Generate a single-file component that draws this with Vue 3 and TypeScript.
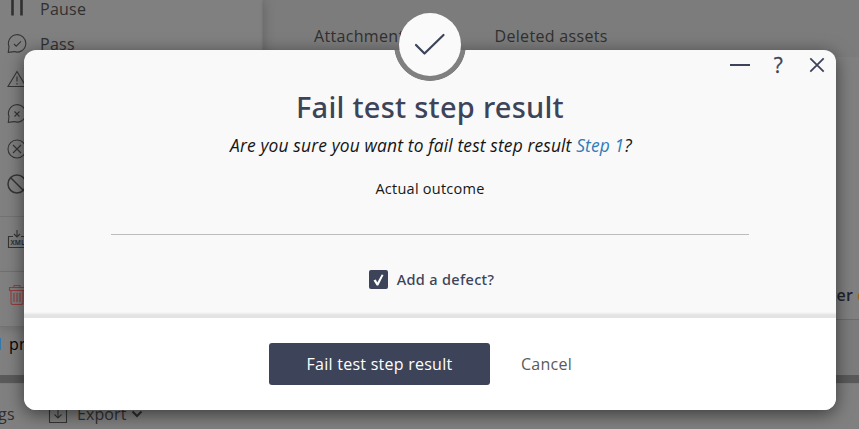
<script setup lang="ts">
import { ref } from 'vue'

const outcome = ref('')
const addDefect = ref(true)
</script>

<template>
  <div class="screen">
    <div class="page">
      <div class="upper">
        <aside class="side">
          <div class="menu">
            <div class="item">
              <svg class="pause" width="20" height="24" viewBox="0 0 20 24"><path d="M5.500 0v18.500M14.500 0v18.500" /></svg>
              <span>Pause</span>
            </div>
            <div class="item">
              <svg width="20" height="20" viewBox="0 0 20 20"><path d="M1.300 18.300 2 12.500A8.700 8.700 0 1 1 7.300 17.600Z" /><path d="m7 10 2.200 2.200 4.800-4.800" /></svg>
              <span>Pass</span>
            </div>
            <div class="item">
              <svg width="20" height="20" viewBox="0 0 20 20"><path d="M10 2.500 19 17.500H1Z" /><path d="M10 7.500v5M10 14v1.500" /></svg>
            </div>
            <div class="item">
              <svg width="20" height="20" viewBox="0 0 20 20"><path d="M1.300 18.300 2 12.500A8.700 8.700 0 1 1 7.300 17.600Z" /><path d="m7.500 7.500 5 5m0-5-5 5" /></svg>
            </div>
            <div class="item">
              <svg width="20" height="20" viewBox="0 0 20 20"><circle cx="10" cy="10" r="9" /><path d="m6 6 8 8m0-8-8 8" /></svg>
            </div>
            <div class="item">
              <svg class="bold" width="20" height="20" viewBox="0 0 20 20"><circle cx="10" cy="10" r="9" /><path d="m3.500 3.500 13 13" /></svg>
            </div>
          </div>
          <div class="group">
            <svg width="20" height="20" viewBox="0 0 20 20"><path d="M6 7.500H1.500v11h17v-11H14M10 1v7M7 5l3 3 3-3" /><text x="3.500" y="16" class="xml">XML</text></svg>
          </div>
          <div class="group last">
            <svg class="trash" width="20" height="22" viewBox="0 0 20 22"><path d="M2.500 3.500h15v3h-15zM7 3.500v-2h6v2M4 6.500v12q0 2 2 2h8q2 0 2-2v-12M7 9v9M10 9v9M13 9v9" /></svg>
          </div>
          <div class="project"><span class="mark"></span>pr</div>
        </aside>
        <main class="content">
          <nav class="tabs"><span>Attachments</span><span>Deleted assets</span></nav>
          <div class="panel"><span>ter</span><i>d</i></div>
        </main>
      </div>
      <div class="divider"></div>
      <div class="toolbar">
        <span class="tags">gs</span>
        <svg width="20" height="20" viewBox="0 0 20 20"><path d="M6 5.500H1.500v13h17v-13H14M10 2v12M6.500 10.500 10 14l3.500-3.500" /></svg>
        <span>Export</span>
        <svg class="chevron" width="12" height="8" viewBox="0 0 12 8"><path d="m1.500 1.500 4.500 4.500 4.500-4.500" /></svg>
      </div>
    </div>

    <section class="modal" role="dialog">
      <div class="notch"></div>
      <div class="badge">
        <svg width="32" height="24" viewBox="0 0 32 24"><path d="m2 12 8.500 8.500L29.500 2" /></svg>
      </div>
      <div class="controls">
        <svg width="22" height="18" viewBox="0 0 22 18"><path d="M1 9h20" /></svg>
        <span class="help">?</span>
        <svg class="close" width="16" height="16" viewBox="0 0 16 16"><path d="m1.300 1.300 13.400 13.400m0-13.400L1.300 14.700" /></svg>
      </div>
      <div class="body">
        <h1>Fail test step result</h1>
        <p class="question">Are you sure you want to fail test step result <a>Step 1</a>?</p>
        <label class="caption" for="outcome">Actual outcome</label>
        <input id="outcome" v-model="outcome" class="field" type="text" />
        <div class="check" @click="addDefect = !addDefect">
          <span class="box"><svg v-if="addDefect" width="13" height="14" viewBox="0 0 13 14"><path d="M1.500 7.600 3.800 6.500 5.300 9.500 9.700 1.500 11.500 2 6.300 12.500H4.700Z" /></svg></span>
          <span class="check-text">Add a defect?</span>
        </div>
      </div>
      <footer>
        <button class="primary">Fail test step result</button>
        <button class="cancel">Cancel</button>
      </footer>
    </section>
  </div>
</template>

<style>
body { overflow: hidden; }
</style>

<style scoped>
* { box-sizing: border-box; }
.screen { position: relative; width: 859px; height: 429px; overflow: hidden; background: #7c7c7c; font-family: "Open Sans", sans-serif; font-size: 16px; line-height: 22px; letter-spacing: .25px; color: #303030; }
svg { display: block; flex: none; fill: none; stroke: #353535; stroke-width: 1.1; }
.page { height: 100%; display: flex; flex-direction: column; }
.upper { height: 375px; display: flex; overflow: hidden; }
.side { width: 263px; flex: none; background: #808080; box-shadow: 0 0 12px rgba(0,0,0,.22); }
.menu { height: 217px; border-bottom: 1px solid #737373; }
.item { height: 35.200px; padding-left: 7px; display: flex; align-items: center; gap: 13px; }
.item:first-child { height: 26px; padding-bottom: 8px; }
.item .pause { stroke-width: 2.600; stroke: #303030; }
.bold { stroke-width: 1.500; }
.group { height: 55px; padding: 12px 0 0 7px; border-bottom: 1px solid #737373; }
.group.last { box-shadow: 0 3px 8px rgba(0,0,0,.12); }
.xml { font: bold 6.500px "Open Sans", sans-serif; letter-spacing: 0; fill: #303030; stroke: none; }
.trash { stroke: #943e3e; }
.project { height: 34px; display: flex; align-items: center; gap: 8px; color: #050505; }
.mark { width: 1px; height: 12px; background: #3378a9; }
.content { flex: 1; }
.tabs { height: 57px; padding: 25px 0 0 51px; display: flex; gap: 82px; letter-spacing: .33px; box-shadow: 0 1px 3px rgba(0,0,0,.2); }
.panel { height: 263px; background: #808080; border-bottom: 1px solid #6c6c6c; display: flex; align-items: flex-end; gap: 4px; padding: 0 0 13px 567px; font-weight: 600; color: #20242e; overflow: hidden; }
.panel i { color: #a65e1c; font-style: normal; }
.divider { height: 8px; background: #5a5a5a; }
.toolbar { flex: 1; background: #808080; display: flex; align-items: center; padding-top: 14px; border-top: 1px solid #7b7b7b; }
.tags { width: 48px; margin-left: -2px; }
.toolbar svg { margin-left: 2px; }
.toolbar svg + span { margin: 0 3px 0 9px; letter-spacing: .1px; }
.toolbar .chevron { margin-left: 1px; stroke: #2d2d2d; stroke-width: 2; }

.modal { position: absolute; left: 24px; top: 50px; width: 812px; height: 360px; border-radius: 12px; background: #f9f9f9; box-shadow: 0 4px 18px rgba(0,0,0,.55); display: flex; flex-direction: column; }
.notch { position: absolute; left: 370px; top: 0; width: 72px; height: 31px; background: radial-gradient(circle at 36px -5px, #808080 35.500px, transparent 36.200px); }
.badge { position: absolute; left: 375px; top: -37px; width: 62px; height: 63px; border-radius: 50%; background: #fafafa; display: flex; align-items: center; justify-content: center; }
.badge svg { stroke: #3d4459; stroke-width: 2.200; stroke-linecap: round; stroke-linejoin: round; }
.controls { position: absolute; right: 11px; top: 2px; height: 26px; display: flex; align-items: center; }
.controls svg { stroke: #3d4459; stroke-width: 2; }
.controls .close { stroke-width: 1.800; }
.help { width: 33px; margin: 0 14px 0 11px; text-align: center; font-size: 21px; line-height: 26px; color: #3d4459; -webkit-text-stroke: .3px #3d4459; }
.body { height: 268px; display: flex; flex-direction: column; align-items: center; padding-top: 37px; background: linear-gradient(to bottom, transparent 262px, #e3e3e3 265px); border-radius: 12px 12px 0 0; }
h1 { margin: 0; font-family: "Noto Sans", sans-serif; font-size: 29px; line-height: 40px; font-weight: 500; letter-spacing: .26px; color: #3d4459; }
.question { margin: 6px 0 0; padding-left: 2px; font-size: 17.400px; line-height: 24px; font-style: italic; letter-spacing: .14px; color: #151515; }
.question a { color: #2e7cb8; }
.caption { margin-top: 22px; font-size: 14.500px; line-height: 20px; letter-spacing: .25px; color: #161616; }
.field { width: 638px; height: 36px; border: 0; border-bottom: 1px solid #bcbcbc; background: transparent; outline: 0; }
.check { margin-top: 34px; padding-left: 3px; display: flex; align-items: center; gap: 9px; height: 21px; }
.box { width: 19px; height: 19px; border-radius: 2px; background: #3d4459; display: flex; align-items: center; justify-content: center; }
.box svg { fill: #fff; stroke: none; }
.check-text { padding-bottom: 2px; font-family: "Noto Sans", sans-serif; font-size: 14.500px; font-weight: 500; letter-spacing: .33px; color: #3d4459; }
footer { height: 92px; background: #fff; border-radius: 0 0 12px 12px; display: flex; align-items: center; padding-left: 245px; }
button { border: 0; font: 16px "Open Sans", sans-serif; letter-spacing: .25px; padding: 0; }
.primary { width: 221px; height: 42px; border-radius: 3px; background: #3d4459; color: #fff; }
.cancel { margin-left: 31px; background: transparent; color: #5a5a5a; }
</style>
